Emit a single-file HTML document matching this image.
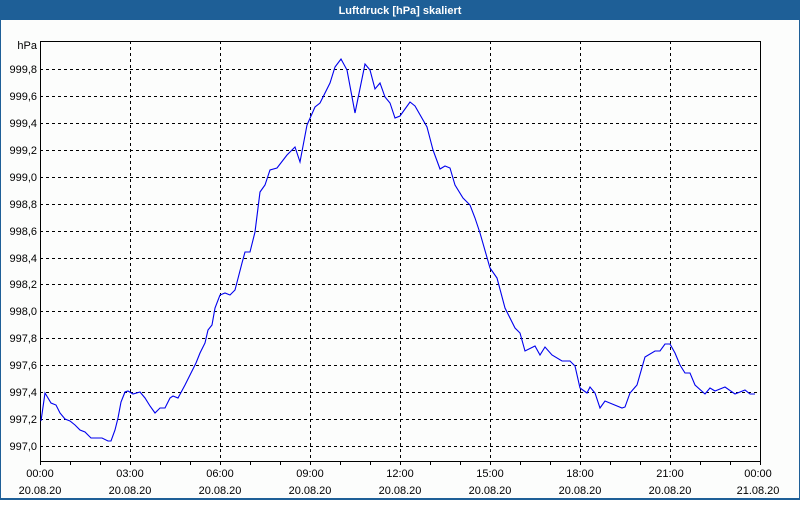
<!DOCTYPE html>
<html><head><style>
body{margin:0;width:800px;height:500px;overflow:hidden;background:#fff}
</style></head><body>
<svg width="800" height="500" xmlns="http://www.w3.org/2000/svg" font-family="Liberation Sans, sans-serif" font-size="11">
<rect x="0" y="0" width="800" height="500" fill="#fcfdfc"/>
<rect x="0" y="0" width="800" height="20" fill="#1e5f97"/>
<rect x="0" y="0" width="1" height="500" fill="#1e5f97"/>
<rect x="799" y="0" width="1" height="500" fill="#1e5f97"/>
<rect x="0" y="498" width="800" height="2" fill="#1e5f97"/>
<text x="400" y="14" fill="#fff" font-weight="bold" text-anchor="middle">Luftdruck [hPa] skaliert</text>
<g stroke="#000" stroke-dasharray="3,3" stroke-width="1">
<path d="M40 69.5H760M40 96.5H760M40 123.5H760M40 150.5H760M40 177.5H760M40 204.5H760M40 231.5H760M40 258.5H760M40 284.5H760M40 311.5H760M40 338.5H760M40 365.5H760M40 392.5H760M40 419.5H760M40 446.5H760"/>
<path d="M130.5 41V461M220.5 41V461M310.5 41V461M400.5 41V461M490.5 41V461M580.5 41V461M670.5 41V461"/>
</g>
<path d="M40.5 461V41.5H760.5V461.5H40" fill="none" stroke="#000"/>
<path d="M40.5 461v4M70.5 461v4M100.5 461v4M130.5 461v4M160.5 461v4M190.5 461v4M220.5 461v4M250.5 461v4M280.5 461v4M310.5 461v4M340.5 461v4M370.5 461v4M400.5 461v4M430.5 461v4M460.5 461v4M490.5 461v4M520.5 461v4M550.5 461v4M580.5 461v4M610.5 461v4M640.5 461v4M670.5 461v4M700.5 461v4M730.5 461v4M760.5 461v4" stroke="#000"/>
<g text-anchor="end" fill="#000">
<text x="37" y="49">hPa</text>
<text x="37" y="73">999,8</text><text x="37" y="100">999,6</text><text x="37" y="127">999,4</text><text x="37" y="154">999,2</text><text x="37" y="181">999,0</text><text x="37" y="208">998,8</text><text x="37" y="235">998,6</text><text x="37" y="262">998,4</text><text x="37" y="288">998,2</text><text x="37" y="315">998,0</text><text x="37" y="342">997,8</text><text x="37" y="369">997,6</text><text x="37" y="396">997,4</text><text x="37" y="423">997,2</text><text x="37" y="450">997,0</text>
</g>
<g text-anchor="middle" fill="#000">
<text x="40" y="477">00:00</text><text x="40" y="494">20.08.20</text>
<text x="130" y="477">03:00</text><text x="130" y="494">20.08.20</text>
<text x="220" y="477">06:00</text><text x="220" y="494">20.08.20</text>
<text x="310" y="477">09:00</text><text x="310" y="494">20.08.20</text>
<text x="400" y="477">12:00</text><text x="400" y="494">20.08.20</text>
<text x="490" y="477">15:00</text><text x="490" y="494">20.08.20</text>
<text x="580" y="477">18:00</text><text x="580" y="494">20.08.20</text>
<text x="670" y="477">21:00</text><text x="670" y="494">20.08.20</text>
<text x="758" y="477">00:00</text><text x="758" y="494">21.08.20</text>
</g>
<polyline fill="none" stroke="#0000ee" stroke-width="1.1" points="41,421 45,393 48,398 51,403 56,405 60,413 65,419 70,421 75,425 80,430 85,432 88,435 91,438 95,438 102,438 108,441 111,441 115,430 118,418 121,402 125,392 128,391 133,394 140,392 145,398 150,406 155,413 160,408 165,408 170,398 173,396 178,398 185,385 192,371 196,363 200,353 205,343 208,330 212,325 215,308 220,295 225,293 230,295 235,290 242,263 245,252 250,252 255,232 260,192 265,185 270,170 277,168 287,155 295,147 300,162 307,125 315,107 320,103 330,83 335,67 341,59 347,70 355,113 365,64 370,70 375,89 380,83 385,97 390,103 395,118 400,116 410,102 415,106 427,127 433,150 440,169 445,166 450,168 455,185 463,198 470,205 475,218 480,233 490,268 497,278 505,308 515,328 520,333 525,351 535,346 540,355 545,347 552,355 562,361 570,361 575,366 580,388 587,393 590,387 595,393 600,408 605,401 622,408 625,407 630,393 637,385 645,357 655,351 660,351 665,344 670,344 675,353 680,365 685,373 690,373 695,385 705,394 710,388 715,391 725,387 735,394 745,390 750,394 755,394"/>
</svg>
</body></html>
